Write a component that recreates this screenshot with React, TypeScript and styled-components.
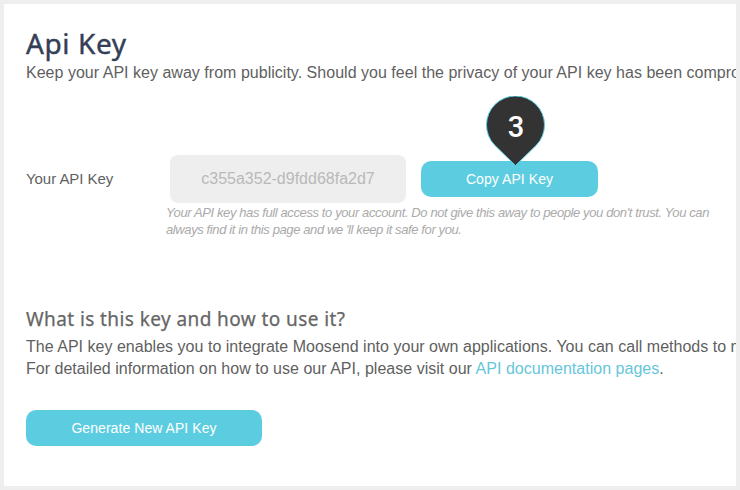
import React from "react";
import styled, { createGlobalStyle } from "styled-components";

const GlobalStyle = createGlobalStyle`
  * { box-sizing: border-box; }
  body {
    margin: 0;
    background: #fff;
    font-family: "Liberation Sans", Arial, sans-serif;
    color: #5f5f5f;
  }
`;

const Page = styled.main`
  width: 740px;
  height: 490px;
  border: 4px solid #eee;
  background: #fff;
  padding: 22px 0 0 22px;
  overflow: hidden;
`;

const Title = styled.h1`
  margin: 0;
  height: 36px;
  font: 400 28px/35px "Noto Sans", sans-serif;
  letter-spacing: 0.6px;
  color: #343e56;
  -webkit-text-stroke: 0.4px #343e56;
`;

const Subtitle = styled.h2`
  margin: 0;
  height: 26px;
  font: 400 19px/26px "Noto Sans", sans-serif;
  letter-spacing: 0.41px;
  color: #666;
  -webkit-text-stroke: 0.25px #666;
`;

const Text = styled.p`
  margin: 0;
  font-size: 16px;
  line-height: 22px;
  letter-spacing: 0.02px;
  white-space: nowrap;
`;

const KeyRow = styled.div`
  display: flex;
  align-items: center;
  height: 48px;
  margin-top: 71px;
`;

const Label = styled.label`
  width: 144px;
  padding-bottom: 2px;
  font-size: 15px;
  letter-spacing: -0.05px;
`;

const KeyField = styled.output`
  width: 236px;
  height: 48px;
  margin-right: 15px;
  border-radius: 8px;
  background: #eee;
  color: #b9b9b9;
  font-size: 16px;
  line-height: 48px;
  text-align: center;
`;

const Button = styled.button<{ $width: number }>`
  position: relative;
  display: block;
  width: ${(p) => p.$width}px;
  height: 36px;
  padding: 0;
  border: 0;
  border-radius: 10px;
  background: #5ccde0;
  color: #fff;
  font: 400 14px/36px "Liberation Sans", Arial, sans-serif;
  letter-spacing: 0.06px;
  text-align: center;
`;

const Marker = styled.span`
  position: absolute;
  left: 65px;
  top: -65px;
  width: 60px;
  height: 70px;
`;

const MarkerShape = styled.svg`
  display: block;
`;

const MarkerNumber = styled.span`
  position: absolute;
  inset: 1px 0 auto;
  font: 500 29px/61px Roboto, sans-serif;
  text-align: center;
`;

const Hint = styled.p`
  width: 570px;
  margin: 1px 0 0 140px;
  font-size: 13px;
  font-style: italic;
  line-height: 17px;
  letter-spacing: -0.39px;
  color: #aaa;
  white-space: nowrap;
`;

const Info = styled.section`
  margin-top: 68px;
`;

const InfoText = styled.div`
  margin: 4px 0 30px;
`;

const Link = styled.a`
  color: #66c6da;
  text-decoration: none;
`;

export default function App() {
  return (
    <>
      <GlobalStyle />
      <Page>
        <Title>Api Key</Title>
        <Text>
          Keep your API key away from publicity. Should you feel the privacy of your API key has been compromised
        </Text>
        <KeyRow>
          <Label>Your API Key</Label>
          <KeyField>c355a352-d9fdd68fa2d7</KeyField>
          <Button $width={177}>
            Copy API Key
            <Marker>
              <MarkerShape width="60" height="70" viewBox="0 0 60 70">
                <path
                  d="M29.5 69.5 8.5 49A29 29 0 1 1 50.5 49Z"
                  fill="#333"
                  stroke="#5ccde0"
                  strokeWidth="1"
                />
              </MarkerShape>
              <MarkerNumber>3</MarkerNumber>
            </Marker>
          </Button>
        </KeyRow>
        <Hint>
          Your API key has full access to your account. Do not give this away to people you don't trust. You can
          <br />
          always find it in this page and we 'll keep it safe for you.
        </Hint>
        <Info>
          <Subtitle>What is this key and how to use it?</Subtitle>
          <InfoText>
            <Text>
              The API key enables you to integrate Moosend into your own applications. You can call methods to manage
            </Text>
            <Text>
              For detailed information on how to use our API, please visit our <Link>API documentation pages</Link>.
            </Text>
          </InfoText>
          <Button $width={236}>Generate New API Key</Button>
        </Info>
      </Page>
    </>
  );
}
